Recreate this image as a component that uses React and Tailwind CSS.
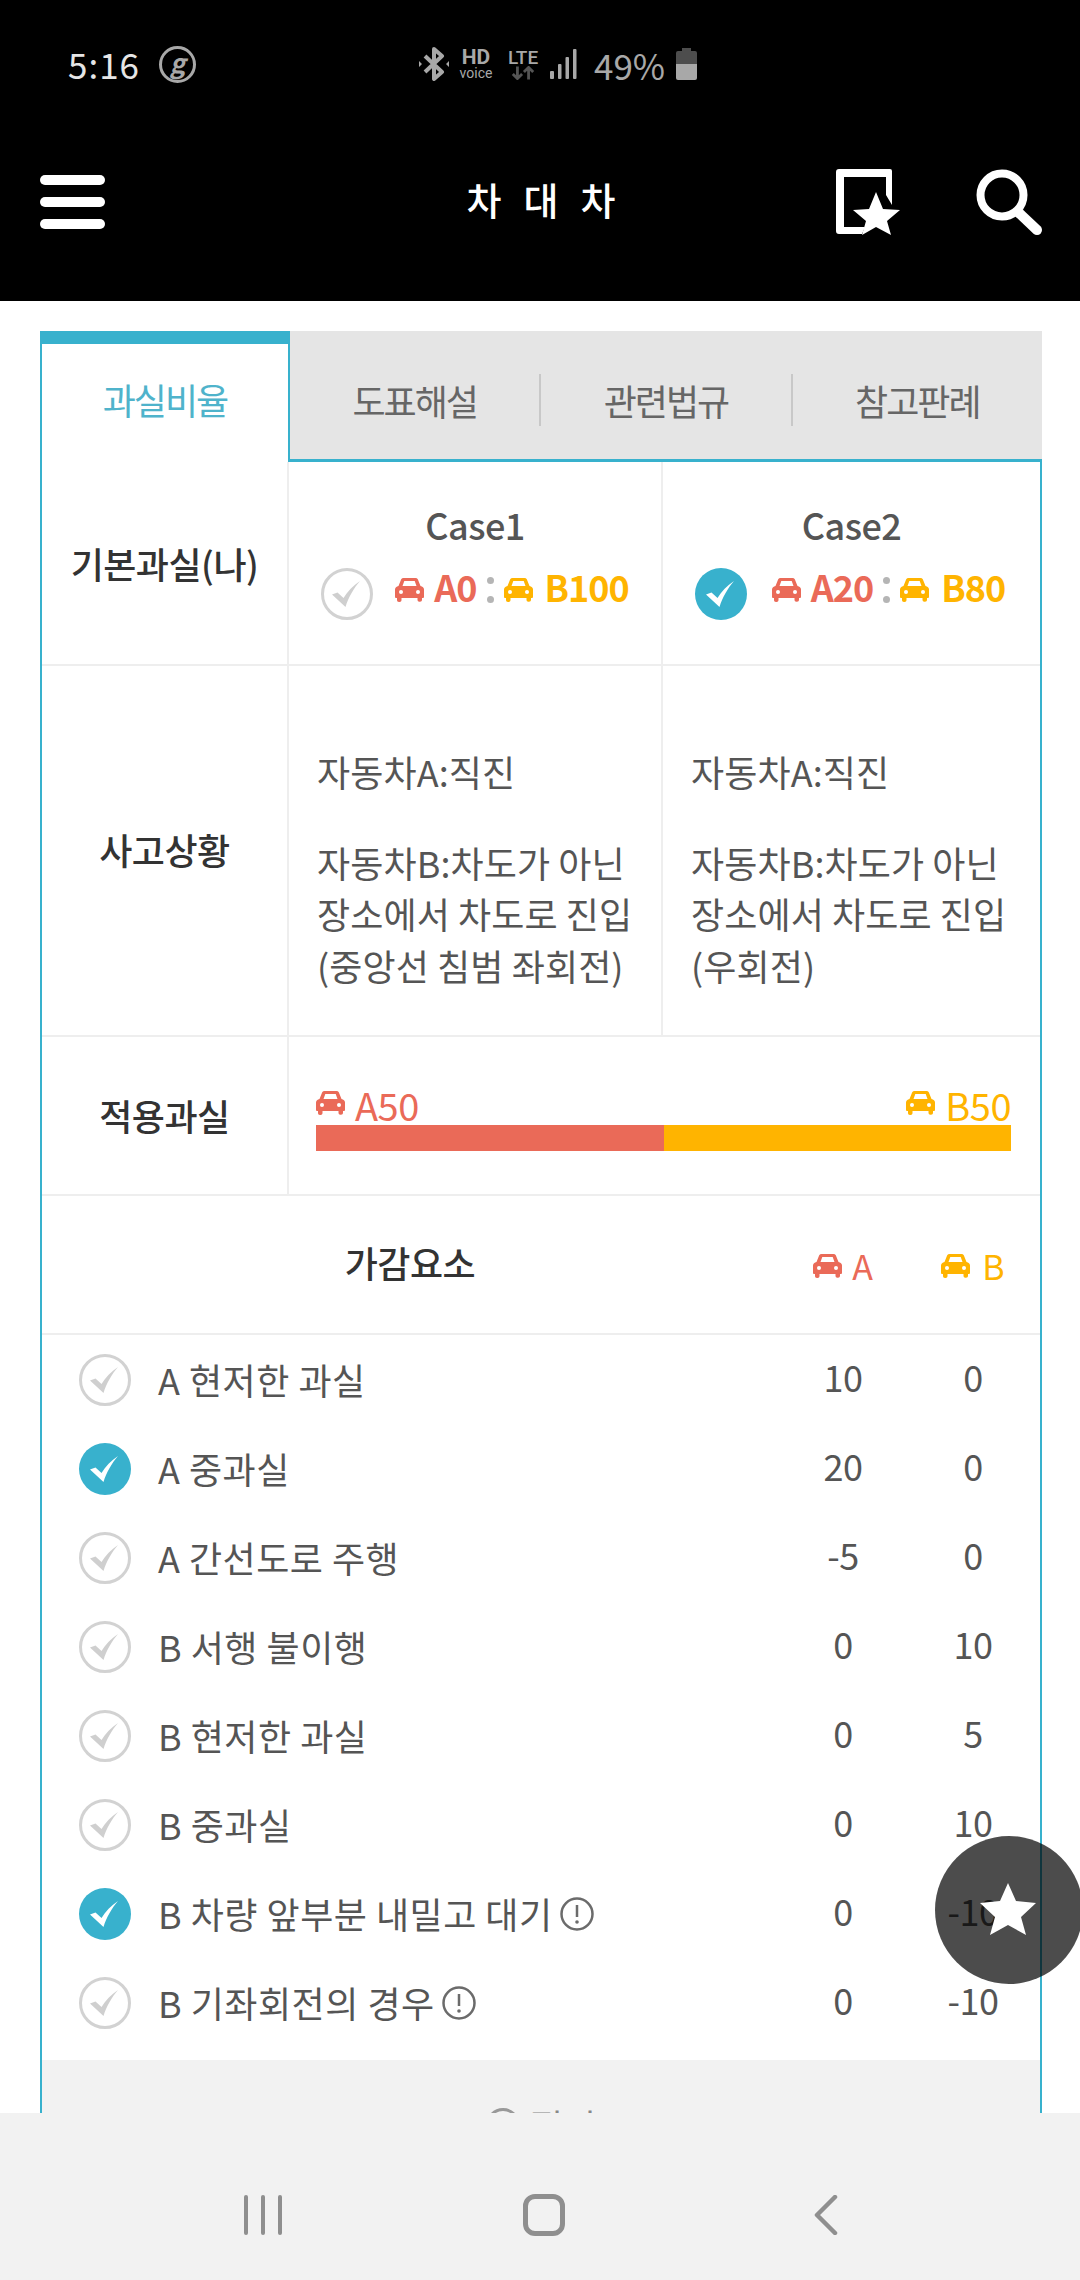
const TEAL_LINE = "border-[#38b1cd]";

function CarIcon({ color, className = "" }) {
  return (
    <svg viewBox="0 0 29 24" className={"h-[24px] w-[29px] shrink-0 " + className} fill={color}>
      <path d="M6.200 1.200C6.700.4 7.500 0 8.500 0h12c1 0 1.800.4 2.300 1.200L25.500 8c2 .5 3.500 1.600 3.500 3.600v7.200c0 .8-.5 1.200-1.200 1.200H27v1.700c0 1.300-.7 2-2 2h-.5c-1.300 0-2-.7-2-2V20h-16v2c0 1.300-.7 2-2 2H4c-1.300 0-2-.7-2-2v-2h-.8C.5 20 0 19.600 0 18.800v-7.200C0 9.600 1.500 8.500 3.500 8zM7.500 8h14l-1.800-5H9.300z" />
      <circle cx="6" cy="14" r="2" fill="#fff" />
      <circle cx="23" cy="14" r="2" fill="#fff" />
    </svg>
  );
}

function Check({ on }) {
  return (
    <span
      className={
        "flex h-[52px] w-[52px] shrink-0 items-center justify-center rounded-full " +
        (on ? "bg-[#38b1cd]" : "border-[3px] border-[#d2d2d2] bg-white")
      }
    >
      <svg viewBox="0 0 30 28" className="h-[28px] w-[30px]" fill={on ? "#fff" : "#cfcfcf"}>
        <path d="M0 14.500 L5.500 12.500 L11.500 18 C15.500 11.500 21 5.500 28 1 C22 8 16.500 17 13.500 27 Z" />
      </svg>
    </span>
  );
}

function Info() {
  return (
    <svg viewBox="0 0 34 34" className="ml-[7px] mt-[2px] h-[34px] w-[34px] shrink-0" fill="none">
      <circle cx="17" cy="17" r="15.500" stroke="#6b6b6b" strokeWidth="2.500" />
      <path d="M17 8v12" stroke="#6b6b6b" strokeWidth="2.500" />
      <circle cx="17" cy="25" r="1.800" fill="#6b6b6b" />
    </svg>
  );
}

function Score({ a, b }) {
  return (
    <div className="mt-[8px] flex items-center">
      <CarIcon color="#ea6a58" />
      <span className="ml-[10px] -mt-[8px] text-[36px] leading-none font-semibold tracking-[-1px] text-[#ea6a58]">{a}</span>
      <span className="mx-[10px] flex h-[26px] flex-col justify-between">
        <span className="h-[7px] w-[7px] rounded-full bg-[#b5b5b5]" />
        <span className="h-[7px] w-[7px] rounded-full bg-[#b5b5b5]" />
      </span>
      <CarIcon color="#ffb400" />
      <span className="ml-[12px] -mt-[8px] text-[36px] leading-none font-semibold tracking-[-1px] text-[#ffb400]">{b}</span>
    </div>
  );
}

function CaseCell({ name, on, a, b, className }) {
  return (
    <div className={"flex flex-col items-center pt-[39px] " + className}>
      <div className="text-[36px] leading-[46px] font-medium tracking-[-0.5px] text-[#555]">{name}</div>
      <div className={"mt-[21px] flex items-start " + (on ? "gap-[25px] pr-[3px]" : "gap-[22px]")}>
        <Check on={on} />
        <Score a={a} b={b} />
      </div>
    </div>
  );
}

function Situation({ turn, className }) {
  return (
    <div className={"pl-[28px] pt-[80px] text-[36px] leading-[51.500px] tracking-[0.1px] whitespace-nowrap text-[#555] " + className}>
      <p>자동차A:직진</p>
      <p className="mt-[39px]">자동차B:차도가 아닌</p>
      <p>장소에서 차도로 진입</p>
      <p>{turn}</p>
    </div>
  );
}

const factors = [
  { label: "A 현저한 과실", a: "10", b: "0" },
  { label: "A 중과실", a: "20", b: "0", on: true },
  { label: "A 간선도로 주행", a: "-5", b: "0" },
  { label: "B 서행 불이행", a: "0", b: "10" },
  { label: "B 현저한 과실", a: "0", b: "5" },
  { label: "B 중과실", a: "0", b: "10" },
  { label: "B 차량 앞부분 내밀고 대기", a: "0", b: "-10", on: true, info: true },
  { label: "B 기좌회전의 경우", a: "0", b: "-10", info: true },
];

function FactorRow({ row }) {
  return (
    <div className="flex h-[89px] items-center pl-[37px] pr-[2px]">
      <Check on={row.on} />
      <div className="ml-[27px] flex flex-1 items-center pb-[2px] text-[36px] tracking-[0.5px] text-[#555]">
        {row.label}
        {row.info && <Info />}
      </div>
      <div className="w-[130px] pb-[8px] text-center text-[36px] tracking-[-0.5px] text-[#555]">{row.a}</div>
      <div className="w-[130px] pb-[8px] text-center text-[36px] tracking-[-0.5px] text-[#555]">{row.b}</div>
    </div>
  );
}

function StatusBar() {
  return (
    <div className="flex h-[128px] items-center pl-[68px] text-[#a8a8a8]">
      <span className="text-[35px] tracking-[1px] text-[#e6e6e6]">5:16</span>
      <span className="ml-[19px] flex h-[37px] w-[37px] items-center justify-center rounded-full border-[3px] border-[#a8a8a8] pb-[4px] text-[26px] leading-none font-bold italic">
        g
      </span>
      <svg viewBox="0 0 30 34" className="ml-[223px] h-[34px] w-[30px]" fill="none" stroke="#a8a8a8" strokeWidth="4">
        <path d="M6 9l17 16-8 7V2l8 7L6 25" strokeLinejoin="round" />
        <path d="M0 14v6l3-3zM30 14v6l-3-3z" fill="#a8a8a8" strokeWidth="0" />
      </svg>
      <div className="ml-[10px] flex w-[34px] flex-col items-center font-['Roboto',sans-serif] leading-none">
        <span className="text-[21px] font-bold leading-[18px]">HD</span>
        <span className="text-[14px] leading-[14px]">voice</span>
      </div>
      <div className="ml-[14px] flex w-[32px] flex-col items-center font-['Roboto',sans-serif] leading-none">
        <span className="text-[19px] font-medium leading-[17px]">LTE</span>
        <svg viewBox="0 0 28 14" className="h-[14px] w-[26px]" stroke="#555" strokeWidth="3" fill="none">
          <path d="M8 0v12M3 8l5 5 5-5" />
          <path d="M20 14V2M15 6l5-5 5 5" />
        </svg>
      </div>
      <svg viewBox="0 0 27 30" className="ml-[11px] h-[30px] w-[27px]" fill="#a8a8a8">
        <rect x="0" y="22" width="4" height="8" rx="1" />
        <rect x="8" y="15" width="3.500" height="15" rx="1" />
        <rect x="15.500" y="8" width="3.500" height="22" rx="1" />
        <rect x="23" y="0" width="3.500" height="30" rx="1" />
      </svg>
      <span className="ml-[17px] text-[35px] leading-none">49%</span>
      <svg viewBox="0 0 21 32" className="ml-[11px] h-[32px] w-[21px]">
        <path d="M6 0h9v3h4a2 2 0 0 1 2 2v11H0V5a2 2 0 0 1 2-2h4z" fill="#4d4d4d" />
        <path d="M0 16h21v14a2 2 0 0 1-2 2H2a2 2 0 0 1-2-2z" fill="#a8a8a8" />
      </svg>
    </div>
  );
}

function TopBar() {
  return (
    <div className="flex h-[148px] items-center pl-[40px] pr-[38px]">
      <div className="flex flex-1 flex-col gap-[12px]">
        <span className="h-[10px] w-[65px] rounded-full bg-white" />
        <span className="h-[10px] w-[65px] rounded-full bg-white" />
        <span className="h-[10px] w-[65px] rounded-full bg-white" />
      </div>
      <div className="pb-[8px] pl-[22px] text-[38px] font-medium tracking-[22px] text-white">차대차</div>
      <div className="flex flex-1 items-center justify-end gap-[76px]">
        <svg viewBox="0 0 64 66" className="h-[66px] w-[64px]">
          <path d="M0 3a3 3 0 0 1 3-3h51a2 2 0 0 1 2 2v34l-6-10V8H8v50h21l-3 7H3a3 3 0 0 1-3-3z" fill="#fff" />
          <path d="M40 23l7 17 17 1-13 11 4 14-15-8-14 8 4-14-13-11 16-1z" fill="#fff" />
        </svg>
        <svg viewBox="0 0 66 66" className="h-[66px] w-[66px]" fill="none" stroke="#fff">
          <circle cx="26" cy="26" r="21.500" strokeWidth="8" />
          <path d="M43 44l18 17" strokeWidth="10" strokeLinecap="round" />
        </svg>
      </div>
    </div>
  );
}

function Tabs() {
  return (
    <div className="flex h-[131px]">
      <div className="flex w-[250px] items-center justify-center border-x-2 border-t-[13px] border-x-[#38b1cd] border-t-[#38b1cd] bg-white pb-[8px] text-[36px] tracking-[-2px] text-[#4fb3cb]">
        과실비율
      </div>
      <div className={"flex flex-1 items-center border-b-[3px] bg-[#e5e5e5] pt-[10px] text-[36px] tracking-[-2px] text-[#666] " + TEAL_LINE}>
        <div className="flex h-[52px] flex-1 items-center justify-center border-r-2 border-[#c8c8c8]">도표해설</div>
        <div className="flex h-[52px] flex-1 items-center justify-center border-r-2 border-[#c8c8c8]">관련법규</div>
        <div className="flex h-[52px] flex-1 items-center justify-center">참고판례</div>
      </div>
    </div>
  );
}

export default function App() {
  return (
    <div className="relative flex h-[2280px] w-[1080px] flex-col overflow-hidden bg-white font-['Noto_Sans_CJK_KR','Noto_Sans',sans-serif]">
      <header className="h-[301px] bg-black">
        <StatusBar />
        <TopBar />
      </header>

      <main className="min-h-0 flex-1 overflow-hidden pl-[40px] pr-[38px] pt-[30px]">
        <Tabs />
        <div className={"border-x-2 " + TEAL_LINE}>
          {/* 기본과실 */}
          <div className="flex h-[204px] border-b-2 border-[#eeeeee]">
            <div className="flex w-[247px] items-center justify-center border-r-2 border-[#eeeeee] text-[36px] font-medium tracking-[-0.5px] text-[#333]">
              기본과실(나)
            </div>
            <CaseCell name="Case1" a="A0" b="B100" className="w-[374px] border-r-2 border-[#eeeeee]" />
            <CaseCell name="Case2" on a="A20" b="B80" className="flex-1" />
          </div>

          {/* 사고상황 */}
          <div className="flex h-[371px] border-b-2 border-[#eeeeee]">
            <div className="flex w-[247px] items-center justify-center border-r-2 border-[#eeeeee] pb-[4px] text-[36px] font-medium tracking-[-0.5px] text-[#333]">
              사고상황
            </div>
            <Situation turn="(중앙선 침범 좌회전)" className="w-[374px] border-r-2 border-[#eeeeee]" />
            <Situation turn="(우회전)" className="flex-1" />
          </div>

          {/* 적용과실 */}
          <div className="flex h-[159px] border-b-2 border-[#eeeeee]">
            <div className="flex w-[247px] items-center justify-center border-r-2 border-[#eeeeee] pb-[2px] text-[36px] font-medium tracking-[-0.5px] text-[#333]">
              적용과실
            </div>
            <div className="flex-1 pl-[27px] pr-[29px] pt-[48px]">
              <div className="flex h-[40px] items-start justify-between">
                <div className="flex items-start">
                  <CarIcon color="#ea6a58" className="mt-[6px]" />
                  <span className="ml-[10px] text-[38px] leading-[40px] tracking-[-0.5px] text-[#ea6a58]">A50</span>
                </div>
                <div className="flex items-start">
                  <CarIcon color="#ffb400" className="mt-[6px]" />
                  <span className="ml-[10px] text-[38px] leading-[40px] tracking-[-0.5px] text-[#ffb400]">B50</span>
                </div>
              </div>
              <div className="flex h-[26px]">
                <div className="w-1/2 bg-[#ea6a58]" />
                <div className="w-1/2 bg-[#ffb400]" />
              </div>
            </div>
          </div>

          {/* 가감요소 */}
          <div className="flex h-[139px] items-center border-b-2 border-[#eeeeee] pr-[2px]">
            <div className="flex flex-1 justify-center pb-[6px] text-[36px] font-medium tracking-[-0.5px] text-[#333]">
              가감요소
            </div>
            <div className="flex w-[130px] items-center justify-center pt-[2px]">
              <CarIcon color="#ea6a58" />
              <span className="ml-[10px] text-[34px] text-[#ea6a58]">A</span>
            </div>
            <div className="flex w-[130px] items-center justify-center pt-[2px]">
              <CarIcon color="#ffb400" />
              <span className="ml-[12px] text-[34px] text-[#ffb400]">B</span>
            </div>
          </div>

          {factors.map((row) => (
            <FactorRow key={row.label} row={row} />
          ))}

          <div className="mt-[13px] flex h-[120px] items-start justify-center bg-[#f2f2f2] pt-[47px] text-[36px] leading-[36px] text-[#888]">
            <span className="mr-[10px] mt-[1px] h-[34px] w-[34px] rounded-full border-[3px] border-[#999]" />
            접기
          </div>
        </div>
      </main>

      <nav className="flex h-[167px] shrink-0 items-center bg-[#f2f2f2] pt-[36px]">
        <div className="ml-[244px] flex h-[40px] w-[38px] justify-between">
          <span className="w-[4px] rounded-full bg-[#8f8f8f]" />
          <span className="w-[4px] rounded-full bg-[#8f8f8f]" />
          <span className="w-[4px] rounded-full bg-[#8f8f8f]" />
        </div>
        <div className="ml-[241px] h-[42px] w-[42px] rounded-[12px] border-[5px] border-[#8f8f8f]" />
        <svg viewBox="0 0 24 40" className="ml-[249px] h-[40px] w-[24px]" fill="none" stroke="#8f8f8f" strokeWidth="4.500" strokeLinecap="round" strokeLinejoin="round">
          <path d="M21 2 3 20l18 18" />
        </svg>
      </nav>

      <div className="absolute left-[935px] top-[1836px] flex h-[148px] w-[148px] items-center justify-center rounded-full bg-black/70 pr-[2px] pb-[2px]">
        <svg viewBox="0 0 56 52" className="h-[52px] w-[56px]" fill="#fff">
          <path d="M28 0l8 18 20 2-15 14 5 18-18-10-18 10 5-18L0 20l20-2z" />
        </svg>
      </div>
    </div>
  );
}
